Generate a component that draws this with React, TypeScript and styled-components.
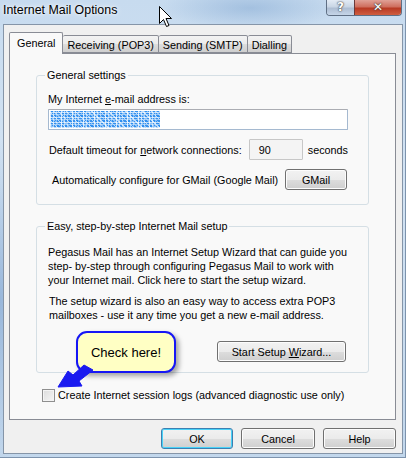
import React from 'react';
import styled, { createGlobalStyle } from 'styled-components';

const GlobalStyle = createGlobalStyle`
  html, body {
    margin: 0;
    padding: 0;
    background: #ffffff;
  }
  body {
    font-family: 'Liberation Sans', Arial, sans-serif;
    font-size: 10.8px;
    color: #000;
  }
`;

const Window = styled.div`
  position: relative;
  width: 406px;
  height: 458px;
  box-sizing: border-box;
  display: flex;
  flex-direction: column;
  overflow: hidden;
  background:
    radial-gradient(ellipse 90px 22px at 250px 8px, rgba(120, 160, 205, 0.45), transparent),
    radial-gradient(ellipse 40px 160px at 0px 300px, rgba(110, 150, 200, 0.55), transparent),
    linear-gradient(180deg, #c7dbef 0%, #d3e3f3 40%, #c2d7ec 100%);
  border-right: 1px solid #7d93ad;
  border-bottom: 1px solid #7d93ad;
`;

const TitleBar = styled.div`
  height: 24px;
  flex: none;
  display: flex;
  align-items: flex-start;
`;

const Title = styled.div`
  font-family: 'Liberation Sans', Arial, sans-serif;
  font-size: 12.4px;
  line-height: 20px;
  padding-left: 3px;
  color: #000;
  text-shadow: 0 0 6px rgba(255, 255, 255, 0.9), 0 0 3px rgba(255, 255, 255, 0.9);
`;

const CaptionButtons = styled.div`
  margin-left: auto;
  margin-right: 3px;
  display: flex;
  border: 1px solid #5f6f84;
  border-top: none;
  border-radius: 0 0 4px 4px;
  overflow: hidden;
  height: 15px;
`;

const CaptionButton = styled.div<{ $close?: boolean }>`
  width: ${(p) => (p.$close ? '46px' : '27px')};
  display: flex;
  align-items: center;
  justify-content: center;
  font-family: 'DejaVu Sans', sans-serif;
  font-weight: bold;
  font-size: 12px;
  line-height: 15px;
  color: #fff;
  text-shadow: 0 0 2px #333, 0 0 1px #333;
  background: ${(p) =>
    p.$close
      ? 'linear-gradient(180deg, #e0a197 0%, #cf6f5e 45%, #b83a24 55%, #cf5e40 100%)'
      : 'linear-gradient(180deg, #e3ebf5 0%, #c9d6e5 45%, #aebed3 55%, #c5d5e8 100%)'};
  border-left: ${(p) => (p.$close ? '1px solid #6b3a3a' : 'none')};
`;

const Client = styled.div`
  flex: 1;
  margin: 0 2px 3px 3px;
  background: #f0f0f0;
  border: 1px solid #8595a8;
  display: flex;
  flex-direction: column;
`;

const TabStrip = styled.div`
  display: flex;
  align-items: flex-end;
  margin-top: 6px;
  padding-left: 5px;
  height: 22px;
  position: relative;
  z-index: 1;
`;

const Tab = styled.div<{ $active?: boolean }>`
  box-sizing: border-box;
  height: ${(p) => (p.$active ? '22px' : '18px')};
  padding: ${(p) => (p.$active ? '0 7px' : '0 4px')};
  margin-bottom: ${(p) => (p.$active ? '-1px' : '0')};
  line-height: ${(p) => (p.$active ? '21px' : '18px')};
  border: 1px solid #898c95;
  border-bottom: ${(p) => (p.$active ? 'none' : '1px solid #898c95')};
  border-left-width: ${(p) => (p.$active ? '1px' : '0')};
  border-radius: 2px 2px 0 0;
  background: ${(p) =>
    p.$active
      ? '#f9f9f9'
      : 'linear-gradient(180deg, #f3f3f3 0%, #ebebeb 50%, #dddddd 51%, #cfcfcf 100%)'};
  white-space: nowrap;
  &:first-child {
    border-left-width: 1px;
  }
`;

const Panel = styled.div`
  box-sizing: border-box;
  height: 367px;
  margin: 0 6px 0 5px;
  border: 1px solid #898c95;
  background: #f9f9f9;
  padding-top: 15px;
  display: flex;
  flex-direction: column;
`;

const Group = styled.fieldset<{ $gap?: number }>`
  margin: ${(p) => p.$gap ?? 0}px 26px 0 26px;
  padding: 0 20px 0 11px;
  border: 1px solid #d5dfe5;
  border-radius: 3px;
  display: flex;
  flex-direction: column;
  min-width: 0;
`;

const Legend = styled.legend`
  padding: 0 2px;
  margin-left: -3px;
  line-height: 13px;
`;

const Label = styled.div<{ $indent?: number }>`
  line-height: 13px;
  padding-left: ${(p) => p.$indent ?? 0}px;
  white-space: nowrap;
`;

const Row = styled.div<{ $top: number; $indent?: number }>`
  display: flex;
  align-items: center;
  margin-top: ${(p) => p.$top}px;
  padding-left: ${(p) => p.$indent ?? 0}px;
  white-space: nowrap;
`;

const TextBox = styled.div<{ $width?: number }>`
  box-sizing: border-box;
  height: 21px;
  width: ${(p) => (p.$width ? `${p.$width}px` : 'auto')};
  flex: ${(p) => (p.$width ? 'none' : '1')};
  border: 1px solid #a5b9d0;
  border-top-color: #abadb3;
  border-radius: 1px;
  background: #fff;
  padding: 1px;
  display: flex;
  align-items: center;
`;

const NumBox = styled(TextBox)`
  border-color: #c7c7c7;
  background: #f4f4f4;
  padding-left: 9px;
  margin: 0 5px 0 auto;
`;

const Scrambled = styled.div`
  width: 110px;
  height: 17px;
  background:
    repeating-linear-gradient(90deg, rgba(255,255,255,0.75) 0 1px, transparent 1px 3px, rgba(255,255,255,0.55) 3px 4px, transparent 4px 6px, rgba(255,255,255,0.4) 6px 7px, transparent 7px 11px),
    repeating-linear-gradient(0deg, rgba(255,255,255,0.65) 0 1px, transparent 1px 3px, rgba(190,220,250,0.7) 3px 4px, transparent 4px 5px),
    repeating-linear-gradient(45deg, #2f8ff0 0 2px, #8cc2f7 2px 3px, #3a93ee 3px 5px, #bcdcfa 5px 6px);
`;

const Button = styled.div<{ $width: number; $default?: boolean }>`
  box-sizing: border-box;
  width: ${(p) => p.$width}px;
  height: 21px;
  flex: none;
  display: flex;
  align-items: center;
  justify-content: center;
  border: 1px solid ${(p) => (p.$default ? '#3c7fb1' : '#707070')};
  border-radius: 3px;
  background: linear-gradient(180deg, #f2f2f2 0%, #ebebeb 50%, #dddddd 51%, #cfcfcf 100%);
  box-shadow: ${(p) =>
    p.$default ? 'inset 0 0 0 1px #48d2f8' : 'inset 0 0 0 1px #fcfcfc'};
  white-space: nowrap;
`;

const Para = styled.p<{ $top: number; $indent?: number }>`
  margin: ${(p) => p.$top}px 0 0 0;
  padding-left: ${(p) => p.$indent ?? 0}px;
  line-height: 14px;
  white-space: nowrap;
`;

const CheckRow = styled.label`
  display: flex;
  align-items: center;
  margin: 16px 0 0 32px;
  line-height: 13px;
  gap: 3px;
`;

const CheckBox = styled.span`
  box-sizing: border-box;
  width: 13px;
  height: 13px;
  border: 1px solid #8f8f8f;
  background: linear-gradient(135deg, #dcdcdc 0%, #f6f6f6 100%);
  box-shadow: inset 0 0 0 1px #f4f4f4;
`;

const ButtonBar = styled.div`
  display: flex;
  justify-content: flex-end;
  gap: 8px;
  margin: 8px 6px 0 0;
`;

const Callout = styled.div`
  position: absolute;
  left: 76px;
  top: 331px;
  box-sizing: border-box;
  width: 100px;
  height: 42px;
  border: 2px solid #1616f5;
  border-radius: 11px;
  background: #ffffc4;
  box-shadow: 3px 3px 5px rgba(0, 0, 0, 0.35);
  display: flex;
  align-items: center;
  justify-content: center;
  font-size: 13px;
  z-index: 3;
`;

const Overlay = styled.svg`
  position: absolute;
  left: 0;
  top: 0;
  pointer-events: none;
  z-index: 4;
`;

const App: React.FC = () => {
  return (
    <>
      <GlobalStyle />
      <Window>
        <TitleBar>
          <Title>Internet Mail Options</Title>
          <CaptionButtons>
            <CaptionButton>?</CaptionButton>
            <CaptionButton $close>✕</CaptionButton>
          </CaptionButtons>
        </TitleBar>
        <Client>
          <TabStrip>
            <Tab $active>General</Tab>
            <Tab>Receiving (POP3)</Tab>
            <Tab>Sending (SMTP)</Tab>
            <Tab>Dialling</Tab>
          </TabStrip>
          <Panel>
            <Group style={{ paddingTop: 11, paddingBottom: 14 }}>
              <Legend>General settings</Legend>
              <Label>
                My Internet <u>e</u>-mail address is:
              </Label>
              <Row $top={3}>
                <TextBox>
                  <Scrambled />
                </TextBox>
              </Row>
              <Row $top={9} $indent={1}>
                <span>
                  Default timeout for <u>n</u>etwork connections:
                </span>
                <NumBox $width={54}>90</NumBox>
                <span>seconds</span>
              </Row>
              <Row $top={9} $indent={4}>
                <span>Automatically configure for GMail (Google Mail)</span>
                <Button $width={62} style={{ marginLeft: 'auto', marginRight: 1 }}>
                  GMail
                </Button>
              </Row>
            </Group>
            <Group $gap={15} style={{ paddingTop: 12, paddingBottom: 10 }}>
              <Legend>Easy, step-by-step Internet Mail setup</Legend>
              <Para $top={0}>
                Pegasus Mail has an Internet Setup Wizard that can guide you
                <br />
                step- by-step through configuring Pegasus Mail to work with
                <br />
                your Internet mail. Click here to start the setup wizard.
              </Para>
              <Para $top={7} $indent={1}>
                The setup wizard is also an easy way to access extra POP3
                <br />
                mailboxes - use it any time you get a new e-mail address.
              </Para>
              <Row $top={19}>
                <Button $width={129} style={{ marginLeft: 'auto', marginRight: 2 }}>
                  <span>
                    Start Setup <u>W</u>izard...
                  </span>
                </Button>
              </Row>
            </Group>
            <CheckRow>
              <CheckBox />
              <span>Create Internet session logs (advanced diagnostic use only)</span>
            </CheckRow>
          </Panel>
          <ButtonBar>
            <Button $width={72} $default>
              OK
            </Button>
            <Button $width={74}>Cancel</Button>
            <Button $width={73}>Help</Button>
          </ButtonBar>
        </Client>

        <Callout>Check here!</Callout>
        <Overlay width={406} height={458} viewBox="0 0 406 458">
          <path
            d="M84 365 L93 370 L79 381 L82 386 L58 387 L68 371 L73 375 Z"
            fill="#1a1af0"
            stroke="#1a1af0"
            strokeWidth={1}
            strokeLinejoin="round"
          />
          <path
            d="M159.5 6.5 L159.5 23.5 L163.5 19.5 L166.5 26.5 L169 25.5 L166 18.5 L171.5 18.5 Z"
            fill="#ffffff"
            stroke="#000000"
            strokeWidth={1}
            strokeLinejoin="miter"
          />
        </Overlay>
      </Window>
    </>
  );
};

export default App;
